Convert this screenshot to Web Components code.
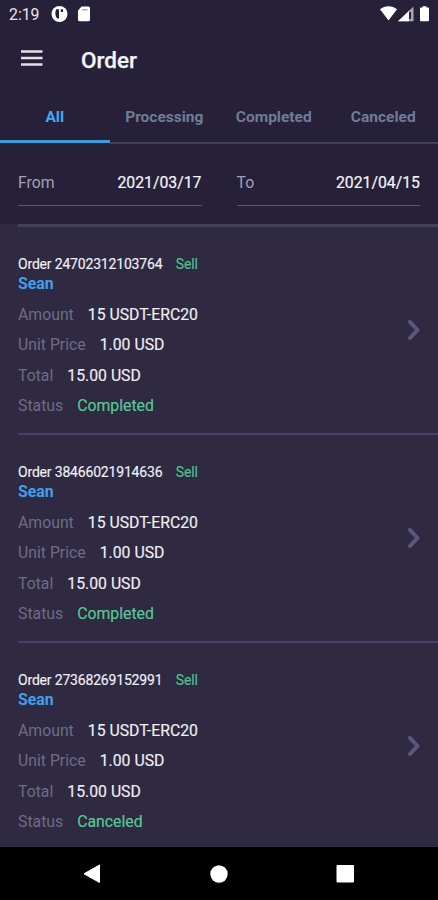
<!DOCTYPE html>
<html lang="en">
<head>
<meta charset="utf-8">
<title>Order</title>
<style>
html, body { margin: 0; height: 100%; overflow: hidden; background: #2f2941; }
body { font-family: Roboto, "Noto Sans", sans-serif; color: #e9e7ef; }
</style>
</head>
<body>
<order-screen></order-screen>
<script>
const define = (name, html, init) => customElements.define(name, class extends HTMLElement {
  connectedCallback() {
    if (this.shadowRoot) return;
    const t = document.createElement('template');
    t.innerHTML = html;
    this.attachShadow({ mode: 'open' }).append(t.content.cloneNode(true));
    if (init) init(this, this.shadowRoot);
  }
});

define('status-bar', `
<style>
:host { display: flex; align-items: center; height: 28px; padding: 0 8px 0 9px; box-sizing: border-box; font-size: 15.8px; color: #e8e6ec; }
span { padding-top: 1px; }
svg { display: block; }
.left { display: block; margin-left: 11.5px; }
.right { margin-left: auto; }
</style>
<span>2:19</span>
<svg class="left" width="40" height="18" viewBox="0 0 40 18">
  <circle cx="8.5" cy="9" r="8" fill="#fff"/>
  <path d="M5.2 4.2H8v9.3H6.4C4.2 11.6 3.8 7 5.2 4.2zM9.8 4.3h2.2v2.6H9.8z" fill="#262138"/>
  <path d="M30.5 1.5h7a1.5 1.5 0 0 1 1.5 1.5v11.8a1.5 1.5 0 0 1-1.5 1.5h-9a1.5 1.5 0 0 1-1.5-1.5V5.5z" fill="#fff"/>
  <path d="M31 4h5.5v1.5H31z" fill="#aaa7b5"/>
</svg>
<svg class="right" width="50" height="18" viewBox="0 0 50 18">
  <path d="M0 4.2C5 .3 12 .3 17 4.2L8.5 15.6z" fill="#fff"/>
  <path d="M33.5 1.5v14.7H18z" fill="#aaa7b2"/>
  <path d="M29 6v10.2H18z" fill="#fff"/>
  <path d="M29 7h2v7h-2z" fill="#262138"/>
  <path d="M42.5 1.2h4v1.3h1.3c.7 0 1.2.5 1.2 1.2v11.2c0 .8-.5 1.3-1.2 1.3h-6.6c-.7 0-1.2-.5-1.2-1.3V3.7c0-.7.5-1.2 1.2-1.2h1.3z" fill="#fff"/>
</svg>`);

define('app-bar', `
<style>
:host { display: flex; align-items: center; height: 62px; padding: 0 21px; box-sizing: border-box; }
svg { display: block; margin-right: 38px; margin-bottom: 3px; }
h1 { margin: 0; font-size: 22.5px; font-weight: 500; color: #f5f4f8; line-height: 28px; padding-top: 1px; -webkit-text-stroke: .25px; }
</style>
<svg width="22" height="18" viewBox="0 0 22 18"><path d="M0 2.5h21.5M0 9h21.5M0 15.5h21.5" stroke="#e2e0e8" stroke-width="2.4"/></svg>
<h1><slot></slot></h1>`);

define('tab-item', `
<style>
:host { display: flex; flex: 1; align-items: center; justify-content: center; height: 54px; box-sizing: border-box; padding-top: 2.5px; border-bottom: 2px solid #454059; font-size: 15.5px; font-weight: 700; color: #707b98; }
:host([active]) { color: #47a8f5; border-bottom: 3px solid #3b9ddd; height: 53px; padding-top: 4.5px; }
</style>
<slot></slot>`);

define('tab-bar', `
<style>:host { display: flex; height: 54px; }</style><slot></slot>`);

define('date-field', `
<style>
:host { display: flex; flex: 1; align-items: center; justify-content: space-between; height: 46px; box-sizing: border-box; border-bottom: 1.5px solid #5a5376; font-size: 15.8px; color: #a3a0b5; }
b { font-weight: 400; color: #f5f4f8; -webkit-text-stroke: .2px; }
</style>
<span></span><b><slot></slot></b>`, (h, r) => r.querySelector('span').textContent = h.getAttribute('label'));

define('date-range', `
<style>
:host { display: flex; gap: 35px; height: 80px; padding: 16px 18px 0; box-sizing: border-box; }
</style><slot></slot>`);

define('detail-row', `
<style>
:host { display: flex; gap: 14px; height: 30.4px; align-items: center; font-size: 15.8px; color: #6d6c88; white-space: nowrap; }
b { font-weight: 400; color: #f0eff5; -webkit-text-stroke: .15px; }
:host([good]) b { color: #58cb98; }
</style>
<span></span><b><slot></slot></b>`, (h, r) => r.querySelector('span').textContent = h.getAttribute('label'));

define('order-card', `
<style>
:host { display: flex; align-items: center; height: 208px; margin-left: 18px; padding: 0 18px 0 0; box-sizing: border-box; border-bottom: 2px solid #49416a; }
.info { flex: 1; padding-top: 15px; }
.head { display: flex; gap: 13.5px; font-size: 14px; letter-spacing: -.18px; line-height: 20px; color: #f0eff5; -webkit-text-stroke: .15px; }
.side { color: #52c18f; }
.who { font-size: 15.9px; line-height: 20px; font-weight: 700; color: #41a0ea; margin-bottom: 5px; }
svg { display: block; }
</style>
<div class="info">
  <div class="head"><span class="no"></span><span class="side">Sell</span></div>
  <div class="who">Sean</div>
  <slot></slot>
</div>
<svg width="12" height="20" viewBox="0 0 12 20"><path d="M2 2l7.5 8L2 18" fill="none" stroke="#5d5681" stroke-width="4" stroke-linecap="round" stroke-linejoin="round"/></svg>`,
(h, r) => r.querySelector('.no').textContent = 'Order ' + h.getAttribute('number'));

define('nav-bar', `
<style>
:host { display: flex; align-items: center; justify-content: center; height: 53px; background: #000; }
svg { display: block; }
</style>
<svg width="438" height="53" viewBox="0 0 438 53" fill="#fff">
  <path d="M84 26.8L99.5 18v17.5z" stroke="#fff" stroke-linejoin="round"/>
  <circle cx="219" cy="27" r="8.7"/>
  <rect x="336.5" y="18" width="17.5" height="17.6" rx="1"/>
</svg>`);

define('order-screen', `
<style>
:host { display: flex; flex-direction: column; width: 438px; height: 900px; overflow: hidden; background: #2f2941; }
header { background: #262138; flex: none; }
main { flex: 1; min-height: 0; overflow: hidden; }
.rule { margin-left: 18px; height: 3px; background: #454059; }
nav-bar { flex: none; }
</style>
<header>
  <status-bar></status-bar>
  <app-bar>Order</app-bar>
  <tab-bar><tab-item active>All</tab-item><tab-item>Processing</tab-item><tab-item>Completed</tab-item><tab-item>Canceled</tab-item></tab-bar>
  <date-range><date-field label="From">2021/03/17</date-field><date-field label="To">2021/04/15</date-field></date-range>
</header>
<main>
  <div class="rule"></div>
  ${[['24702312103764', 'Completed'], ['38466021914636', 'Completed'], ['27368269152991', 'Canceled']].map(([n, s]) => `
  <order-card number="${n}">
    <detail-row label="Amount">15 USDT-ERC20</detail-row>
    <detail-row label="Unit Price">1.00 USD</detail-row>
    <detail-row label="Total">15.00 USD</detail-row>
    <detail-row label="Status" good>${s}</detail-row>
  </order-card>`).join('')}
</main>
<nav-bar></nav-bar>`);
</script>
</body>
</html>
